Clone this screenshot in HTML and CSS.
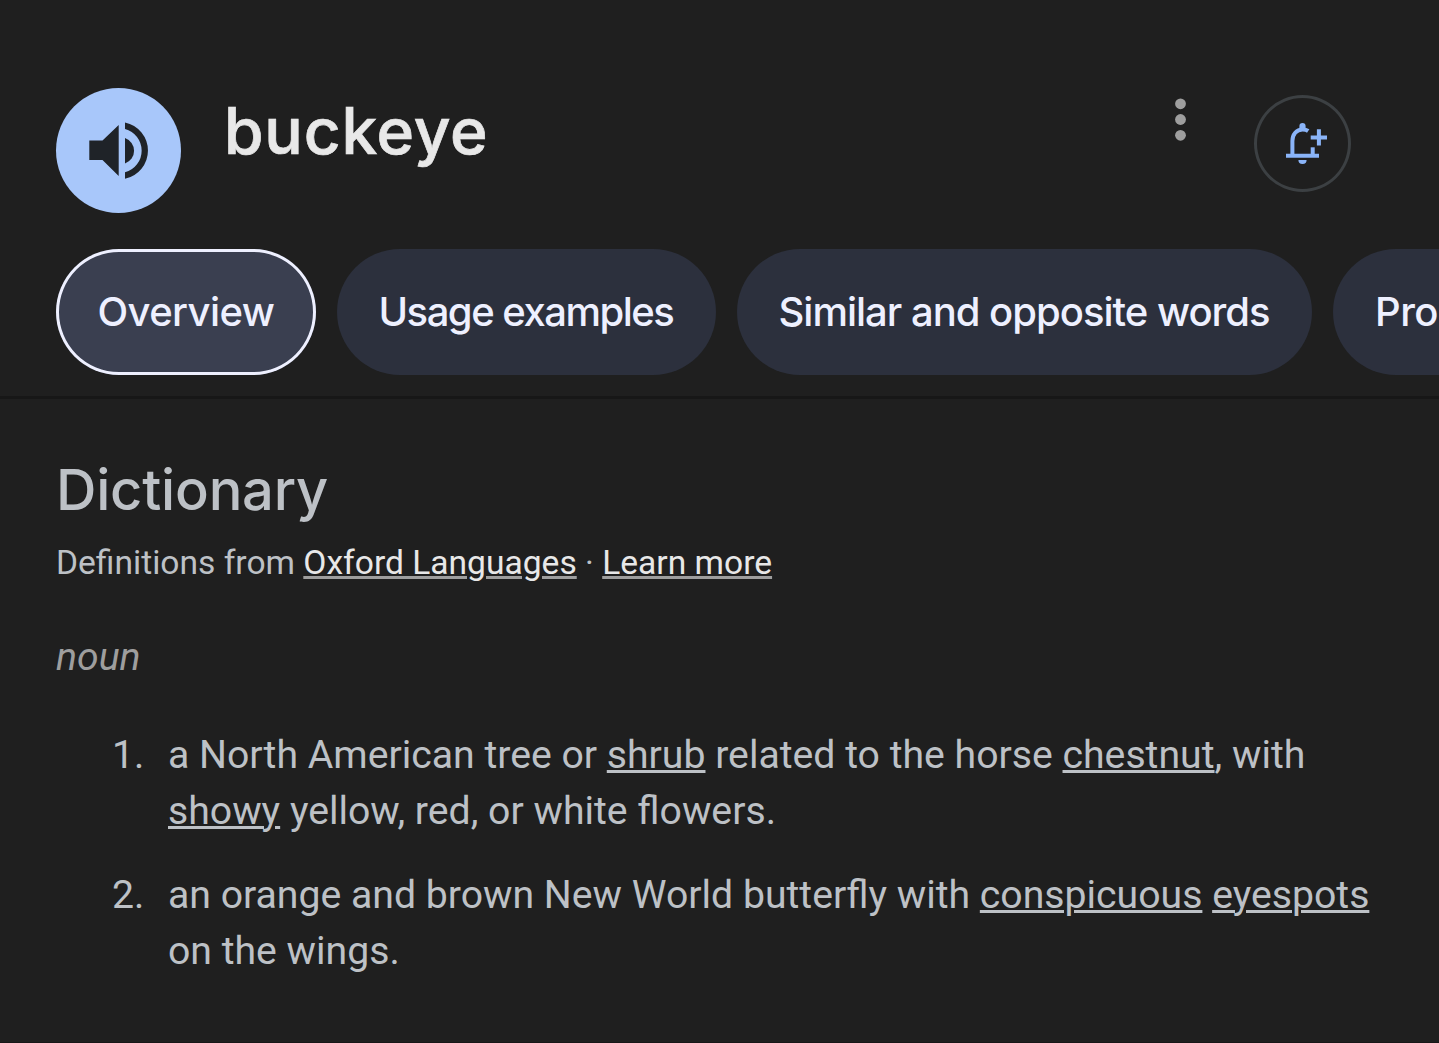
FILE: index.html
```html
<!DOCTYPE html>
<html lang="en">
<head>
    <meta charset="UTF-8">
    <meta name="viewport" content="width=device-width, initial-scale=1.0">
    <title>buckeye</title>
    <link rel="stylesheet" href="styles.css">
</head>
<body>
    <header class="header">
        <button class="speaker" aria-label="Listen">
            <svg width="125" height="125" viewBox="0 0 125 125">
                <path fill="#1f2328" d="M33.3 52.5H46.5L62.7 37V88L46.5 72H33.3Z"/>
                <path fill="#1f2328" d="M69 50A13.5 13.5 0 0 1 69 75.5Z"/>
                <path fill="#1f2328" d="M69 34.4A28.8 28.8 0 0 1 69 90.8V84.3A22.4 22.4 0 0 0 69 41Z"/>
            </svg>
        </button>
        <h1 class="word">buckeye</h1>
        <button class="more" aria-label="More options">
            <svg width="12" height="44" viewBox="0 0 12 44">
                <circle cx="6.5" cy="5.8" r="5.4"/>
                <circle cx="6.5" cy="21.5" r="5.4"/>
                <circle cx="6.5" cy="37.3" r="5.4"/>
            </svg>
        </button>
        <button class="notify" aria-label="Follow">
            <svg width="97" height="97" viewBox="0 0 97 97">
                <g fill="none" stroke="#8ab4f8" stroke-width="4">
                    <path d="M32 60.8H65"/>
                    <path d="M38.4 60V46C38.4 39.5 42.5 34.5 48.5 34.5C51 34.5 52.8 35 54.2 36"/>
                    <path d="M58.7 60V52.3"/>
                    <path d="M56.7 42.4H73M64.9 34.2V50.5"/>
                </g>
                <path fill="#8ab4f8" d="M45.4 35V31A3.1 3.1 0 0 1 51.6 31V35ZM44.4 65H52.6A4.1 4 0 0 1 44.4 65Z"/>
            </svg>
        </button>
    </header>

    <nav class="tabs">
        <a class="tab tab-overview active">Overview</a>
        <a class="tab tab-usage">Usage examples</a>
        <a class="tab tab-similar">Similar and opposite words</a>
        <a class="tab tab-pronunciation">Pronunciation</a>
    </nav>

    <main class="dictionary">
        <h2>Dictionary</h2>
        <p class="source">Definitions from <a>Oxford Languages</a> · <a>Learn more</a></p>
        <p class="part">noun</p>
        <ol class="definitions">
            <li><span class="num">1.</span><p>a North American tree or <a>shrub</a> related to the horse <a>chestnut</a>, with<br><a>showy</a> yellow, red, or white flowers.</p></li>
            <li><span class="num">2.</span><p>an orange and brown New World butterfly with <a>conspicuous</a> <a>eyespots</a><br>on the wings.</p></li>
        </ol>
    </main>
</body>
</html>
```
FILE: styles.css
```css
* {
    box-sizing: border-box;
    margin: 0;
    padding: 0;
}
body {
    height: 1043px;
    background: #1f1f1f;
    color: #bdc1c6;
    font-family: Roboto, sans-serif;
    overflow: hidden;
    border-bottom: 1px solid #171717;
}
button {
    background: none;
    border: none;
}
svg {
    display: block;
}
.header {
    display: flex;
    align-items: flex-start;
    height: 249px;
    padding: 88px 88px 0 56px;
}
.speaker {
    width: 125px;
    height: 125px;
    border-radius: 50%;
    background: #a8c7fa;
}
.word {
    flex: 1;
    margin-left: 43px;
    font-family: Inter, sans-serif;
    font-size: 64px;
    font-weight: 500;
    line-height: 85px;
    letter-spacing: 0.8px;
    -webkit-text-stroke: 0.7px #e8e8e8;
    color: #e8e8e8;
}
.more {
    margin: 10px 68px 0 0;
    fill: #9e9e9e;
}
.notify {
    width: 97px;
    height: 97px;
    margin-top: 7px;
    border-radius: 50%;
    box-shadow: inset 0 0 0 3px #3c4043;
}
.tabs {
    display: flex;
    gap: 21px;
    height: 150px;
    padding-left: 56px;
    border-bottom: 3px solid #171717;
    overflow: hidden;
}
.tab {
    flex-shrink: 0;
    height: 126px;
    padding-left: 41.5px;
    border-radius: 63px;
    background: #2c303d;
    color: #eef0ff;
    font-family: Inter, sans-serif;
    font-size: 40px;
    font-weight: 500;
    line-height: 126px;
    letter-spacing: -1px;
    white-space: nowrap;
}
.tab.active {
    background: #3a3f50;
    box-shadow: inset 0 0 0 3px #eef0ff;
}
.tab-overview {
    width: 260px;
    letter-spacing: -0.6px;
}
.tab-usage {
    width: 379px;
    letter-spacing: -1.5px;
}
.tab-similar {
    width: 575px;
}
.tab-pronunciation {
    width: 360px;
    padding-left: 42px;
    letter-spacing: -0.5px;
}
.dictionary {
    padding: 56px 56px 0;
}
h2 {
    font-family: Inter, sans-serif;
    font-size: 56px;
    font-weight: 500;
    line-height: 70px;
    letter-spacing: -0.2px;
}
.source {
    margin-top: 14px;
    font-size: 33.6px;
    line-height: 48px;
}
.source a {
    color: #e8e8e8;
    text-decoration: underline #9e9e9e 3px;
}
.part {
    margin-top: 42px;
    color: #9e9e9e;
    font-size: 39.2px;
    font-style: italic;
    line-height: 56px;
}
.definitions {
    margin-top: 42px;
    list-style: none;
    font-size: 39.2px;
    line-height: 56px;
}
.definitions li {
    display: flex;
    margin-bottom: 28px;
    padding-left: 56px;
}
.num {
    width: 56px;
}
.definitions p {
    white-space: nowrap;
}
.definitions a {
    text-decoration: underline 3px;
}
```
